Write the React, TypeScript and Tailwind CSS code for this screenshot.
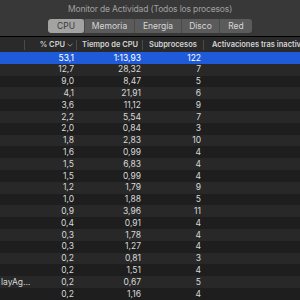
const rows: [string, string, string, string][] = [
  ["", "53,1", "1:13,93", "122"],
  ["", "12,7", "28,32", "7"],
  ["", "9,0", "8,47", "5"],
  ["", "4,1", "21,91", "6"],
  ["", "3,6", "11,12", "9"],
  ["", "2,2", "5,54", "7"],
  ["", "2,0", "0,84", "3"],
  ["", "1,8", "2,83", "10"],
  ["", "1,6", "0,99", "4"],
  ["", "1,5", "6,83", "4"],
  ["", "1,5", "0,99", "4"],
  ["", "1,2", "1,79", "9"],
  ["", "1,0", "1,88", "5"],
  ["", "0,9", "3,96", "11"],
  ["", "0,4", "0,91", "4"],
  ["", "0,3", "1,78", "4"],
  ["", "0,3", "1,27", "4"],
  ["", "0,2", "0,81", "3"],
  ["", "0,2", "1,51", "4"],
  ["layAg…", "0,2", "0,67", "5"],
  ["", "0,2", "1,16", "4"],
];

const tabs: [string, string][] = [
  ["CPU", "w-[36px]"],
  ["Memoria", "w-[50px]"],
  ["Energía", "w-[47px]"],
  ["Disco", "w-[38px]"],
  ["Red", "w-[33px]"],
];

export default function App() {
  return (
    <div className="w-[300px] h-[300px] overflow-hidden bg-[#1e1e1e] font-['Inter',sans-serif] text-[#dcdcdc]">
      <div className="h-[37px] bg-[#383838] border-b border-black flex flex-col items-center">
        <div className="text-[8.5px] tracking-[-0.15px] leading-none text-[#a0a0a0] mt-[5px]">
          Monitor de Actividad (Todos los procesos)
        </div>
        <div className="mt-[5px] flex h-[14px] rounded-[3px] overflow-hidden bg-[#5b5b5b] text-[8.5px] leading-[14px]">
          {tabs.map(([t, w], i) => (
            <div
              key={t}
              className={
                i === 0
                  ? w + " text-center bg-[#a3a3a3] text-[#3a3a3a] rounded-[3px]"
                  : w + " text-center text-[#d6d6d6] border-l border-[#494949]"
              }
            >
              {t}
            </div>
          ))}
        </div>
      </div>

      <div className="h-[15px] bg-[#2a2a2a] flex items-center text-[7.5px] font-semibold text-[#d4d4d4] whitespace-nowrap">
        <div className="w-[25px] h-[10px] border-r border-[#4a4a4a]" />
        <div className="w-[52px] flex justify-end items-center pr-[3px] h-[10px] border-r border-[#4a4a4a]">
          % CPU
          <svg className="ml-[2px]" width="6" height="4" viewBox="0 0 6 4">
            <path d="M0.5 0.8 L3 3.2 L5.5 0.8" stroke="#9a9a9a" strokeWidth="0.9" fill="none" />
          </svg>
        </div>
        <div className="w-[66px] pl-[5px] h-[10px] leading-[10px] border-r border-[#4a4a4a]">
          Tiempo de CPU
        </div>
        <div className="w-[61px] pl-[6px] h-[10px] leading-[10px] border-r border-[#4a4a4a]">
          Subprocesos
        </div>
        <div className="flex-1 pl-[8px] overflow-hidden">
          Activaciones tras inactividad
        </div>
      </div>

      {rows.map((r, i) => (
        <div
          key={i}
          className={
            "h-[11.8px] flex items-center text-[8.5px] leading-none " +
            (i === 0
              ? "bg-[#1f5ad8] text-white"
              : i % 2 === 1
              ? "bg-[#282828] text-[#d8d8d8]"
              : "bg-[#1e1e1e] text-[#d8d8d8]")
          }
        >
          <div className="w-[25px] pl-[1px] whitespace-nowrap overflow-visible">{r[0]}</div>
          <div className="w-[52px] text-right pr-[3px]">{r[1]}</div>
          <div className="w-[67px] text-right pr-[3px]">{r[2]}</div>
          <div className="w-[60px] text-right pr-[3px]">{r[3]}</div>
        </div>
      ))}
    </div>
  );
}
